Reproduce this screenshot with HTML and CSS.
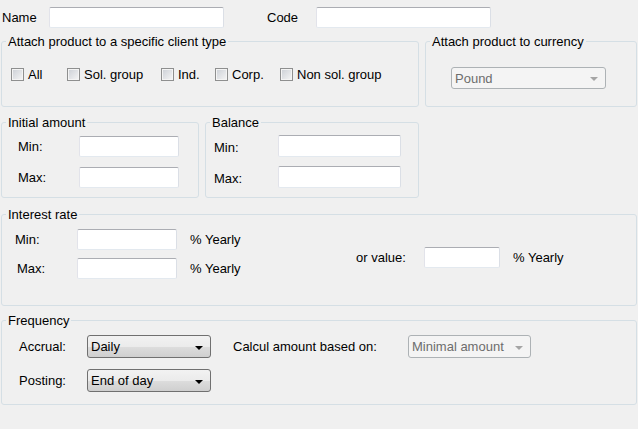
FILE: index.html
```html
<!DOCTYPE html>
<html>
<head>
<meta charset="utf-8">
<link rel="stylesheet" href="styles.css">
</head>
<body>
<div class="page">
  <div class="top-row">
    <span class="lbl name-lbl">Name</span>
    <span class="input top-input"></span>
    <span class="lbl code-lbl">Code</span>
    <span class="input top-input"></span>
  </div>

  <div class="row row-attach">
    <fieldset class="group g-client">
      <legend>Attach product to a specific client type</legend>
      <div class="checks">
        <label class="chk"><span class="box"></span>All</label>
        <label class="chk"><span class="box"></span>Sol. group</label>
        <label class="chk"><span class="box"></span>Ind.</label>
        <label class="chk"><span class="box"></span>Corp.</label>
        <label class="chk"><span class="box"></span>Non sol. group</label>
      </div>
    </fieldset>
    <fieldset class="group g-currency">
      <legend>Attach product to currency</legend>
      <div class="currency-body">
        <div class="combo disabled pound"><span class="val">Pound</span><span class="arrow"></span></div>
      </div>
    </fieldset>
  </div>

  <div class="row row-amount">
    <fieldset class="group g-initial">
      <legend>Initial amount</legend>
      <div class="minmax mm-initial">
        <span class="lbl">Min:</span><span class="input w99"></span>
        <span class="lbl">Max:</span><span class="input w99"></span>
      </div>
    </fieldset>
    <fieldset class="group g-balance">
      <legend>Balance</legend>
      <div class="minmax mm-balance">
        <span class="lbl down">Min:</span><span class="input w122"></span>
        <span class="lbl down">Max:</span><span class="input w122"></span>
      </div>
    </fieldset>
  </div>

  <fieldset class="group g-interest">
    <legend>Interest rate</legend>
    <div class="interest-body">
      <div class="rate-grid">
        <span class="lbl">Min:</span><span class="input w99"></span><span class="lbl pct">% Yearly</span>
        <span class="lbl max-lbl">Max:</span><span class="input w99"></span><span class="lbl pct">% Yearly</span>
      </div>
      <div class="or-value">
        <span class="lbl or-lbl">or value:</span><span class="input w75"></span><span class="lbl yearly">% Yearly</span>
      </div>
    </div>
  </fieldset>

  <fieldset class="group g-frequency">
    <legend>Frequency</legend>
    <div class="freq-grid">
      <span class="lbl">Accrual:</span>
      <div class="combo enabled"><span class="val">Daily</span><span class="arrow"></span></div>
      <span class="lbl calc-lbl">Calcul amount based on:</span>
      <div class="combo disabled"><span class="val">Minimal amount</span><span class="arrow"></span></div>
      <span class="lbl">Posting:</span>
      <div class="combo enabled"><span class="val">End of day</span><span class="arrow"></span></div>
    </div>
  </fieldset>
</div>
</body>
</html>
```

FILE: styles.css
```css
html, body {
  margin: 0;
  padding: 0;
  background: #f0f0f0;
}
body {
  font-family: "Liberation Sans", Arial, sans-serif;
  font-size: 13px;
  color: #000;
  width: 638px;
  height: 429px;
  overflow: hidden;
}
.page {
  padding: 0 1px;
}
.lbl {
  line-height: 15px;
  white-space: nowrap;
}
.input {
  display: block;
  box-sizing: border-box;
  height: 21px;
  background: #fff;
  border: 1px solid #e3e9ef;
  border-top-color: #abadb3;
  border-left-color: #e2e3ea;
  border-right-color: #dbdfe6;
  border-radius: 2px;
}
.top-row {
  display: flex;
  align-items: center;
  padding: 7px 0 0 1px;
  height: 21px;
}
.name-lbl { width: 47px; }
.code-lbl { width: 49px; margin-left: 43px; }
.top-input { width: 175px; }

.group {
  margin: 0;
  padding: 0;
  border: 1px solid #d5dfe5;
  border-radius: 3px;
  min-width: 0;
  box-sizing: border-box;
}
.group legend {
  padding: 0 2px;
  margin-left: 4px;
  line-height: 15px;
}

.row {
  display: flex;
  gap: 6px;
}
.row-attach { margin-top: 6px; }
.g-client { width: 418px; height: 73px; }
.g-currency { width: 212px; height: 73px; }

.checks {
  display: grid;
  grid-template-columns: 56px 94px 54px 65px auto;
  padding: 18px 0 0 9px;
  align-items: center;
}
.chk {
  display: flex;
  align-items: center;
  line-height: 15px;
  white-space: nowrap;
}
.box {
  box-sizing: border-box;
  width: 13px;
  height: 13px;
  border: 1px solid #8e8f8f;
  background: linear-gradient(135deg, #cbcfd5 0%, #f6f6f6 100%);
  box-shadow: inset 0 0 0 1px #f4f4f4;
  margin-right: 4px;
}

.currency-body {
  padding: 18px 0 0 25px;
}
.combo {
  box-sizing: border-box;
  display: flex;
  align-items: center;
  justify-content: space-between;
  height: 23px;
  border-radius: 3px;
  padding: 0 7px 0 3px;
}
.combo .val { line-height: 15px; }
.combo .arrow {
  width: 0;
  height: 0;
  border-left: 4px solid transparent;
  border-right: 4px solid transparent;
  border-top: 4px solid #000;
  margin-top: 2px;
}
.combo.disabled {
  background: #f4f4f4;
  border: 1px solid #adb2b5;
  color: #6d6d6d;
}
.combo.disabled .arrow { border-top-color: #a5a5a5; }
.combo.enabled {
  background: linear-gradient(#f2f2f2 0%, #ebebeb 50%, #dddddd 51%, #cfcfcf 100%);
  border: 1px solid #707070;
}
.pound { width: 155px; height: 22px; }

.row-amount { margin-top: 8px; }
.g-initial { width: 198px; height: 83px; }
.g-balance { width: 214px; height: 83px; }
.minmax {
  display: grid;
  align-items: center;
  row-gap: 10px;
}
.mm-initial {
  grid-template-columns: 61px 100px;
  padding: 6px 0 0 16px;
}
.mm-balance {
  grid-template-columns: 64px 123px;
  padding: 5px 0 0 8px;
  row-gap: 9px;
}
.mm-balance .input { height: 22px; }
.down { position: relative; top: 1px; }
.w99 { width: 100px; }
.w122 { width: 123px; }
.w75 { width: 76px; }

.g-interest {
  margin-top: 9px;
  width: 636px;
  height: 99px;
}
.interest-body {
  display: flex;
  align-items: center;
  padding: 7px 0 0 13px;
}
.rate-grid {
  display: grid;
  grid-template-columns: 62px 100px 75px;
  row-gap: 8px;
  align-items: center;
  width: 237px;
}
.pct { padding-left: 13px; }
.max-lbl { padding-left: 2px; }
.or-value {
  display: flex;
  align-items: center;
  margin-left: 104px;
  margin-top: 6px;
}
.or-lbl { width: 68px; }
.yearly { margin-left: 13px; }

.g-frequency {
  margin-top: 7px;
  width: 636px;
  height: 92px;
}
.freq-grid {
  display: grid;
  grid-template-columns: 68px 124px 197px 123px;
  row-gap: 11px;
  align-items: center;
  padding: 7px 0 0 17px;
}
.calc-lbl { padding-left: 22px; }
```
